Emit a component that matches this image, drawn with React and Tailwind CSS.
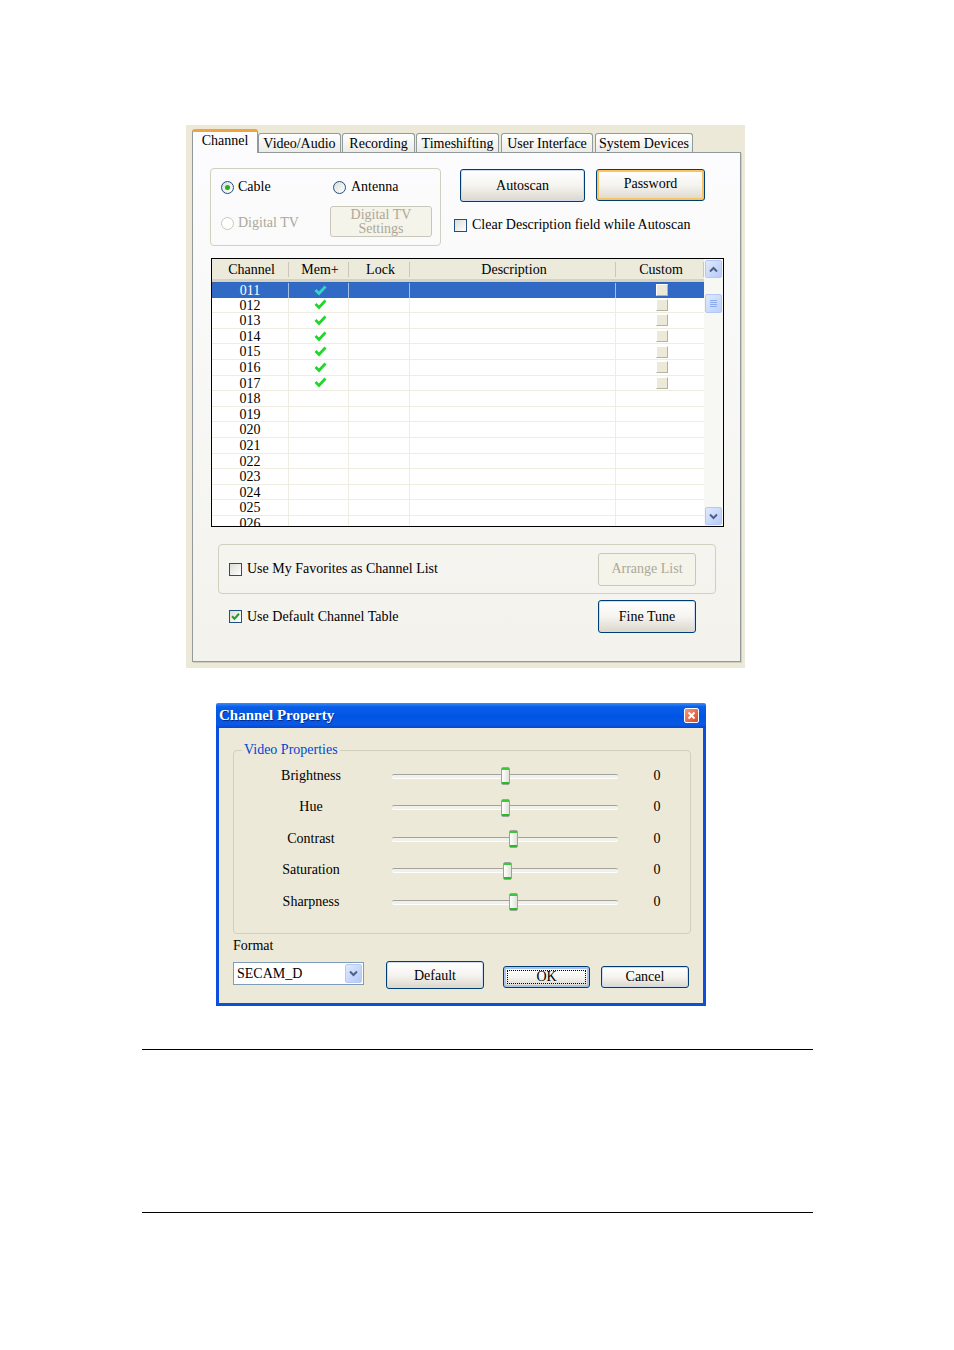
import React from 'react'

const serif = "font-['Liberation_Serif','DejaVu_Serif',serif]"

const channels = ['011', '012', '013', '014', '015', '016', '017', '018', '019', '020', '021', '022', '023', '024', '025', '026']

const sliders = [
  { label: 'Brightness', left: 109 },
  { label: 'Hue', left: 109 },
  { label: 'Contrast', left: 117 },
  { label: 'Saturation', left: 111 },
  { label: 'Sharpness', left: 117 },
]

function Tick({ color = '#22d62c' }) {
  return (
    <svg width="13" height="11" viewBox="0 0 13 11">
      <path d="M1.5 5 L5 8.5 L11.5 1.5" fill="none" stroke={color} strokeWidth="2.8" />
    </svg>
  )
}

function CheckBox({ checked }) {
  return (
    <span className="w-[13px] h-[13px] shrink-0 border border-[#1c5180] bg-gradient-to-br from-[#dcdcd7] to-white flex items-center justify-center">
      {checked && (
        <svg width="9" height="9" viewBox="0 0 9 9">
          <path d="M1 4.2 L3.5 6.7 L8 1.8" fill="none" stroke="#21a121" strokeWidth="2" />
        </svg>
      )}
    </span>
  )
}

function Radio({ checked, disabled }) {
  return (
    <span
      className={`w-[13px] h-[13px] shrink-0 rounded-full border flex items-center justify-center ${
        disabled ? 'border-[#cac8bb] bg-white' : 'border-[#1c5180] bg-gradient-to-br from-[#dcdcd7] to-white'
      }`}
    >
      {checked && <span className="w-[5px] h-[5px] rounded-full bg-[#21b121]" />}
    </span>
  )
}

function Chevron({ up }) {
  return (
    <svg width="9" height="7" viewBox="0 0 9 7">
      <path d={up ? 'M1 5.5 L4.5 2 L8 5.5' : 'M1 1.5 L4.5 5 L8 1.5'} fill="none" stroke="#4d6185" strokeWidth="2" />
    </svg>
  )
}

function XPButton({ children, className = '', kind = 'normal' }) {
  const styles = {
    normal: 'border-[#003c74] bg-gradient-to-b from-white via-[#f5f4f0] to-[#dcd7cb] shadow-[inset_0_0_0_1px_#cddcf3]',
    hot: 'border-[#003c74] bg-gradient-to-b from-white via-[#f5f4f0] to-[#dcd7cb] shadow-[inset_0_0_0_2px_#f9c35f]',
    disabled: 'border-[#c9c7ba] bg-[#f5f4ea] text-[#aca899]',
  }
  return (
    <div className={`flex items-center justify-center rounded-[3px] border text-[14px] leading-none ${styles[kind]} ${className}`}>
      {children}
    </div>
  )
}

function ChannelSettings() {
  const cols = [77, 60, 61, 206, 88]
  return (
    <div className="w-[559px] h-[543px] bg-[#ece9d8] pt-[4px] pl-[6px]">
      {/* tabs */}
      <div className="flex items-end h-[23px] text-[14px] leading-none">
        <div className="relative z-10 w-[66px] h-[24px] -mb-px rounded-t-[3px] border-x border-t-[3px] border-x-[#919b9c] border-t-[#f0a53c] bg-[#fcfcfe] flex justify-center pt-[2px]">
          Channel
        </div>
        <div className="w-[83px] h-[19px] rounded-t-[3px] border border-b-0 border-[#919b9c] bg-gradient-to-b from-white to-[#ecebe5] flex justify-center pt-[3px]">
          Video/Audio
        </div>
        <div className="ml-[1px] w-[73px] h-[19px] rounded-t-[3px] border border-b-0 border-[#919b9c] bg-gradient-to-b from-white to-[#ecebe5] flex justify-center pt-[3px]">
          Recording
        </div>
        <div className="ml-[1px] w-[83px] h-[19px] rounded-t-[3px] border border-b-0 border-[#919b9c] bg-gradient-to-b from-white to-[#ecebe5] flex justify-center pt-[3px]">
          Timeshifting
        </div>
        <div className="ml-[2px] w-[92px] h-[19px] rounded-t-[3px] border border-b-0 border-[#919b9c] bg-gradient-to-b from-white to-[#ecebe5] flex justify-center pt-[3px]">
          User Interface
        </div>
        <div className="ml-[2px] w-[98px] h-[19px] rounded-t-[3px] border border-b-0 border-[#919b9c] bg-gradient-to-b from-white to-[#ecebe5] flex justify-center pt-[3px]">
          System Devices
        </div>
      </div>

      {/* tab page */}
      <div className="w-[549px] h-[510px] border border-[#919b9c] bg-gradient-to-b from-[#fcfcfe] to-[#f3f2ec] shadow-[1px_1px_0_#d0cebf] pt-[15px] pl-[17px] text-[14px]">
        <div className="flex">
          <div className="w-[231px] h-[78px] rounded-[4px] border border-[#d0d0bf] pl-[10px] pt-[11px]">
            <div className="flex items-center h-[14px]">
              <div className="flex items-center w-[112px] gap-[4px]">
                <Radio checked />
                <span className="leading-none">Cable</span>
              </div>
              <div className="flex items-center gap-[5px]">
                <Radio />
                <span className="leading-none">Antenna</span>
              </div>
            </div>
            <div className="flex items-center h-[31px] mt-[12px]">
              <div className="flex items-center w-[109px] gap-[4px] text-[#aca899] mt-[3px]">
                <Radio disabled />
                <span className="leading-none">Digital TV</span>
              </div>
              <div className="w-[102px] h-[31px] rounded-[3px] border border-[#c9c7ba] bg-[#f5f4ea] text-[#aca899] flex flex-col items-center leading-[14px] pt-[1px]">
                <span>Digital TV</span>
                <span>Settings</span>
              </div>
            </div>
          </div>

          <div className="ml-[19px] pt-[1px]">
            <div className="flex">
              <XPButton className="w-[125px] h-[33px]">Autoscan</XPButton>
              <XPButton kind="hot" className="ml-[11px] w-[109px] h-[32px] pb-[2px]">Password</XPButton>
            </div>
            <div className="flex items-center gap-[5px] mt-[16px] -ml-[6px]">
              <CheckBox />
              <span className="leading-none">Clear Description field while Autoscan</span>
            </div>
          </div>
        </div>

        {/* channel list */}
        <div className="mt-[12px] ml-[1px] w-[513px] h-[269px] border border-black bg-white flex">
          <div className="w-[492px] flex flex-col">
            <div className="h-[23px] flex items-center bg-[#ebeadb] border-b-[3px] border-[#d6d2c2]">
              {['Channel', 'Mem+', 'Lock', 'Description', 'Custom'].map((h, i) => (
                <div key={h} className="flex items-center" style={{ width: cols[i] }}>
                  <span className="flex-1 text-center leading-none pt-[1px] pl-[3px]">{h}</span>
                  <span className="w-px h-[15px] bg-[#cbc7b8]" />
                </div>
              ))}
            </div>
            <div className="h-[244px] overflow-hidden">
              {channels.map((ch, r) => {
                const sel = r === 0
                const line = sel ? 'border-[#a8bde3]' : 'border-[#efede2]'
                return (
                  <div
                    key={ch}
                    className={`h-[15.6px] flex leading-[15px] ${sel ? 'bg-[#316ac5] text-white border-t border-dotted border-[#6b5a3a]' : `border-b ${line}`}`}
                  >
                    <div className={`w-[77px] text-center border-r ${line}`}>{ch}</div>
                    <div className={`w-[60px] flex items-center justify-center pl-[3px] border-r ${line}`}>
                      {r < 7 && <Tick color={sel ? '#36d6c6' : '#22d62c'} />}
                    </div>
                    <div className={`w-[61px] border-r ${line}`} />
                    <div className={`w-[206px] border-r ${line}`} />
                    <div className="w-[88px] flex items-center justify-center">
                      {r < 7 && (
                        <span className="w-[12px] h-[12px] ml-[3px] bg-[#ece9d8] border border-t-white border-l-white border-r-[#b5b2a2] border-b-[#b5b2a2]" />
                      )}
                    </div>
                  </div>
                )
              })}
            </div>
          </div>
          {/* scrollbar */}
          <div className="w-[19px] bg-[#f7f7f3] flex flex-col items-center py-[1px]">
            <div className="w-[17px] h-[18px] rounded-[2px] border border-[#b4c8f6] bg-gradient-to-br from-[#e0e9fe] to-[#b7cbf8] flex items-center justify-center">
              <Chevron up />
            </div>
            <div className="mt-[16px] w-[17px] h-[19px] rounded-[2px] border border-[#b4c8f6] bg-gradient-to-br from-[#e0e9fe] to-[#bcd0fa] flex flex-col items-center justify-center gap-[1px]">
              <span className="w-[7px] h-px bg-[#8cabea]" />
              <span className="w-[7px] h-px bg-[#8cabea]" />
              <span className="w-[7px] h-px bg-[#8cabea]" />
              <span className="w-[7px] h-px bg-[#8cabea]" />
            </div>
            <div className="flex-1" />
            <div className="w-[17px] h-[18px] rounded-[2px] border border-[#b4c8f6] bg-gradient-to-br from-[#e0e9fe] to-[#b7cbf8] flex items-center justify-center">
              <Chevron />
            </div>
          </div>
        </div>

        {/* favorites group */}
        <div className="mt-[17px] ml-[8px] w-[498px] h-[50px] rounded-[4px] border border-[#d0d0bf] flex items-center justify-between pl-[10px] pr-[19px]">
          <div className="flex items-center gap-[5px]">
            <CheckBox />
            <span className="leading-none">Use My Favorites as Channel List</span>
          </div>
          <XPButton kind="disabled" className="w-[98px] h-[33px]">Arrange List</XPButton>
        </div>

        <div className="mt-[6px] ml-[19px] w-[467px] h-[33px] flex items-center justify-between">
          <div className="flex items-center gap-[5px]">
            <CheckBox checked />
            <span className="leading-none">Use Default Channel Table</span>
          </div>
          <XPButton className="w-[98px] h-[33px]">Fine Tune</XPButton>
        </div>
      </div>
    </div>
  )
}

function ChannelProperty() {
  return (
    <div className="w-[490px] h-[303px] text-[14px]">
      <div className="h-[25px] bg-[linear-gradient(180deg,#3d8cfb_0%,#0a5fe8_15%,#0054e3_55%,#0a59e6_85%,#0846cc_100%)] flex items-center justify-between pl-[3px] pr-[7px] rounded-t-[2px]">
        <span className="text-white font-bold text-[15px] leading-none [text-shadow:1px_1px_0_#0a2a8a]">Channel Property</span>
        <div className="w-[15px] h-[15px] rounded-[2px] border border-white bg-[linear-gradient(135deg,#f39a7f,#d6472a)] flex items-center justify-center">
          <svg width="9" height="9" viewBox="0 0 9 9">
            <path d="M1.5 1.5 L7.5 7.5 M7.5 1.5 L1.5 7.5" stroke="white" strokeWidth="2" />
          </svg>
        </div>
      </div>
      <div className="h-[278px] border-x-[3px] border-b-[3px] border-[#0b4fdc] bg-[#ece9d8] pl-[14px] pt-[22px]">
        <div className="relative w-[458px] h-[184px] rounded-[4px] border border-[#d0d0bf] pt-[9px]">
          <span className="absolute -top-[8px] left-[8px] px-[2px] bg-[#ece9d8] text-[#0046d5] leading-none">Video Properties</span>
          {sliders.map((s) => (
            <div key={s.label} className="h-[31.5px] flex items-center">
              <span className="ml-[17px] w-[120px] text-center leading-none">{s.label}</span>
              <div className="relative ml-[21px] w-[226px] h-[4px] rounded-full border-t border-[#a3a29c] bg-[#f1f1ec] shadow-[0_1px_0_#ffffff]">
                <div
                  className="absolute top-1/2 -translate-y-1/2 w-[9px] h-[18px] rounded-[2px] border border-[#9aa49a] bg-gradient-to-r from-white to-[#e2e2da] flex flex-col justify-between"
                  style={{ left: s.left }}
                >
                  <span className="h-[2px] bg-[#3cc63c]" />
                  <span className="h-[2px] bg-[#2fb52f]" />
                </div>
              </div>
              <span className="ml-[29px] w-[20px] text-center leading-none">0</span>
            </div>
          ))}
        </div>
        <div className="mt-[4px] h-[16px] leading-[16px]">Format</div>
        <div className="mt-[7px] flex items-start">
          <div className="mt-[1px] w-[131px] h-[23px] border border-[#7f9db9] bg-white flex items-center pl-[3px] pr-[1px]">
            <span className="flex-1 leading-none">SECAM_D</span>
            <div className="w-[17px] h-[19px] rounded-[2px] border border-[#bacbf2] bg-gradient-to-br from-[#e0e9fe] to-[#b3c9f7] flex items-center justify-center">
              <Chevron />
            </div>
          </div>
          <XPButton className="ml-[22px] w-[98px] h-[28px] pt-[2px]">Default</XPButton>
          <XPButton className="ml-[19px] mt-[5px] w-[87px] h-[22px] shadow-[inset_0_0_0_2px_#a8c4ef] p-[3px]">
            <span className="w-full h-full border border-dotted border-black flex items-center justify-center">OK</span>
          </XPButton>
          <XPButton className="ml-[11px] mt-[5px] w-[88px] h-[22px]">Cancel</XPButton>
        </div>
      </div>
    </div>
  )
}

export default function App() {
  return (
    <div className={`w-[954px] min-h-[1350px] bg-white text-black pt-[125px] ${serif}`}>
      <div className="pl-[186px]">
        <ChannelSettings />
      </div>
      <div className="mt-[35px] pl-[216px]">
        <ChannelProperty />
      </div>
      <div className="mt-[43px] ml-[142px] w-[671px] h-px bg-black" />
      <div className="mt-[162px] ml-[142px] w-[671px] h-px bg-black" />
    </div>
  )
}
